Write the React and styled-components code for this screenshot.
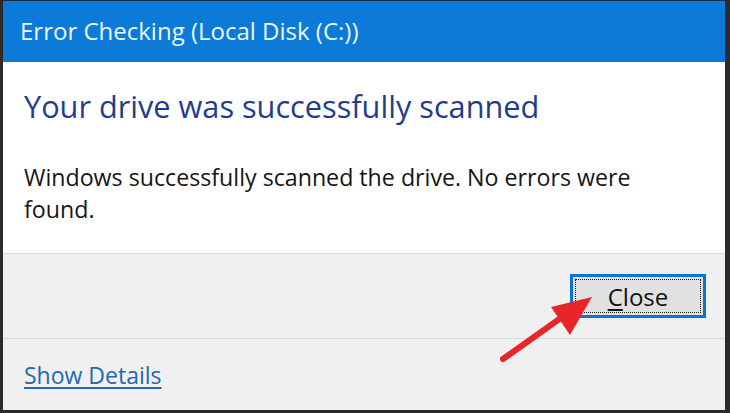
import React from "react";
import styled, { createGlobalStyle } from "styled-components";

const GlobalStyle = createGlobalStyle`
  html, body {
    margin: 0;
    padding: 0;
    background: #ffffff;
  }
  * {
    box-sizing: border-box;
  }
`;

const Window = styled.div`
  position: relative;
  width: 730px;
  height: 413px;
  display: flex;
  flex-direction: column;
  border-top: 1px solid #1f2a3a;
  border-left: 3px solid #2b2b2b;
  border-right: 5px solid #2b2b2b;
  border-bottom: 3px solid #2b2b2b;
  font-family: "Open Sans", "Noto Sans", sans-serif;
  overflow: hidden;
`;

const TitleBar = styled.div`
  height: 61px;
  flex: none;
  display: flex;
  align-items: center;
  padding: 0 0 2px 17px;
  background: #0b7ad8;
  color: #eef5fc;
  font-size: 24px;
`;

const Content = styled.div`
  height: 191px;
  flex: none;
  background: #ffffff;
  padding: 24px 80px 0 21px;
`;

const Heading = styled.h1`
  margin: 0;
  font-size: 30.7px;
  font-weight: 400;
  color: #1f3d8e;
  line-height: 40px;
`;

const Message = styled.p`
  margin: 35px 0 0;
  font-size: 23.2px;
  line-height: 32px;
  color: #151515;
`;

const ButtonBar = styled.div`
  height: 86px;
  flex: none;
  display: flex;
  justify-content: flex-end;
  align-items: center;
  padding: 0 19px 0 0;
  background: #f0f0f0;
  border-top: 1px solid #d9d9d9;
  border-bottom: 1px solid #d9d9d9;
`;

const Button = styled.button`
  width: 136px;
  height: 44px;
  padding: 2px;
  border: 3px solid #0a74d4;
  background: #e1e1e1;
  font-family: inherit;
  cursor: pointer;
`;

const FocusRect = styled.span`
  display: flex;
  height: 100%;
  align-items: center;
  justify-content: center;
  border: 1px dotted #1a1a1a;
  font-size: 24px;
  color: #111;
`;

const AccessKey = styled.span`
  text-decoration: underline;
  text-underline-offset: 3px;
`;

const Footer = styled.div`
  flex: 1;
  display: flex;
  align-items: center;
  padding: 0 0 0 21px;
  background: #f0f0f0;
`;

const DetailsLink = styled.a`
  font-size: 23px;
  color: #2268b4;
  text-decoration: underline;
  text-underline-offset: 3px;
  cursor: pointer;
`;

const Arrow = styled.svg`
  position: absolute;
  left: 0;
  top: 0;
  pointer-events: none;
`;

export default function App() {
  return (
    <>
      <GlobalStyle />
      <Window>
        <TitleBar>Error Checking (Local Disk (C:))</TitleBar>
        <Content>
          <Heading>Your drive was successfully scanned</Heading>
          <Message>
            Windows successfully scanned the drive. No errors were found.
          </Message>
        </Content>
        <ButtonBar>
          <Button>
            <FocusRect>
              <AccessKey>C</AccessKey>lose
            </FocusRect>
          </Button>
        </ButtonBar>
        <Footer>
          <DetailsLink>Show Details</DetailsLink>
        </Footer>
        <Arrow width="730" height="413" viewBox="0 0 730 413">
          <line
            x1="500"
            y1="358"
            x2="562"
            y2="314"
            stroke="#e8262a"
            strokeWidth="6"
            strokeLinecap="round"
          />
          <polygon points="589,296 548,306 567,334" fill="#e8262a" />
        </Arrow>
      </Window>
    </>
  );
}
